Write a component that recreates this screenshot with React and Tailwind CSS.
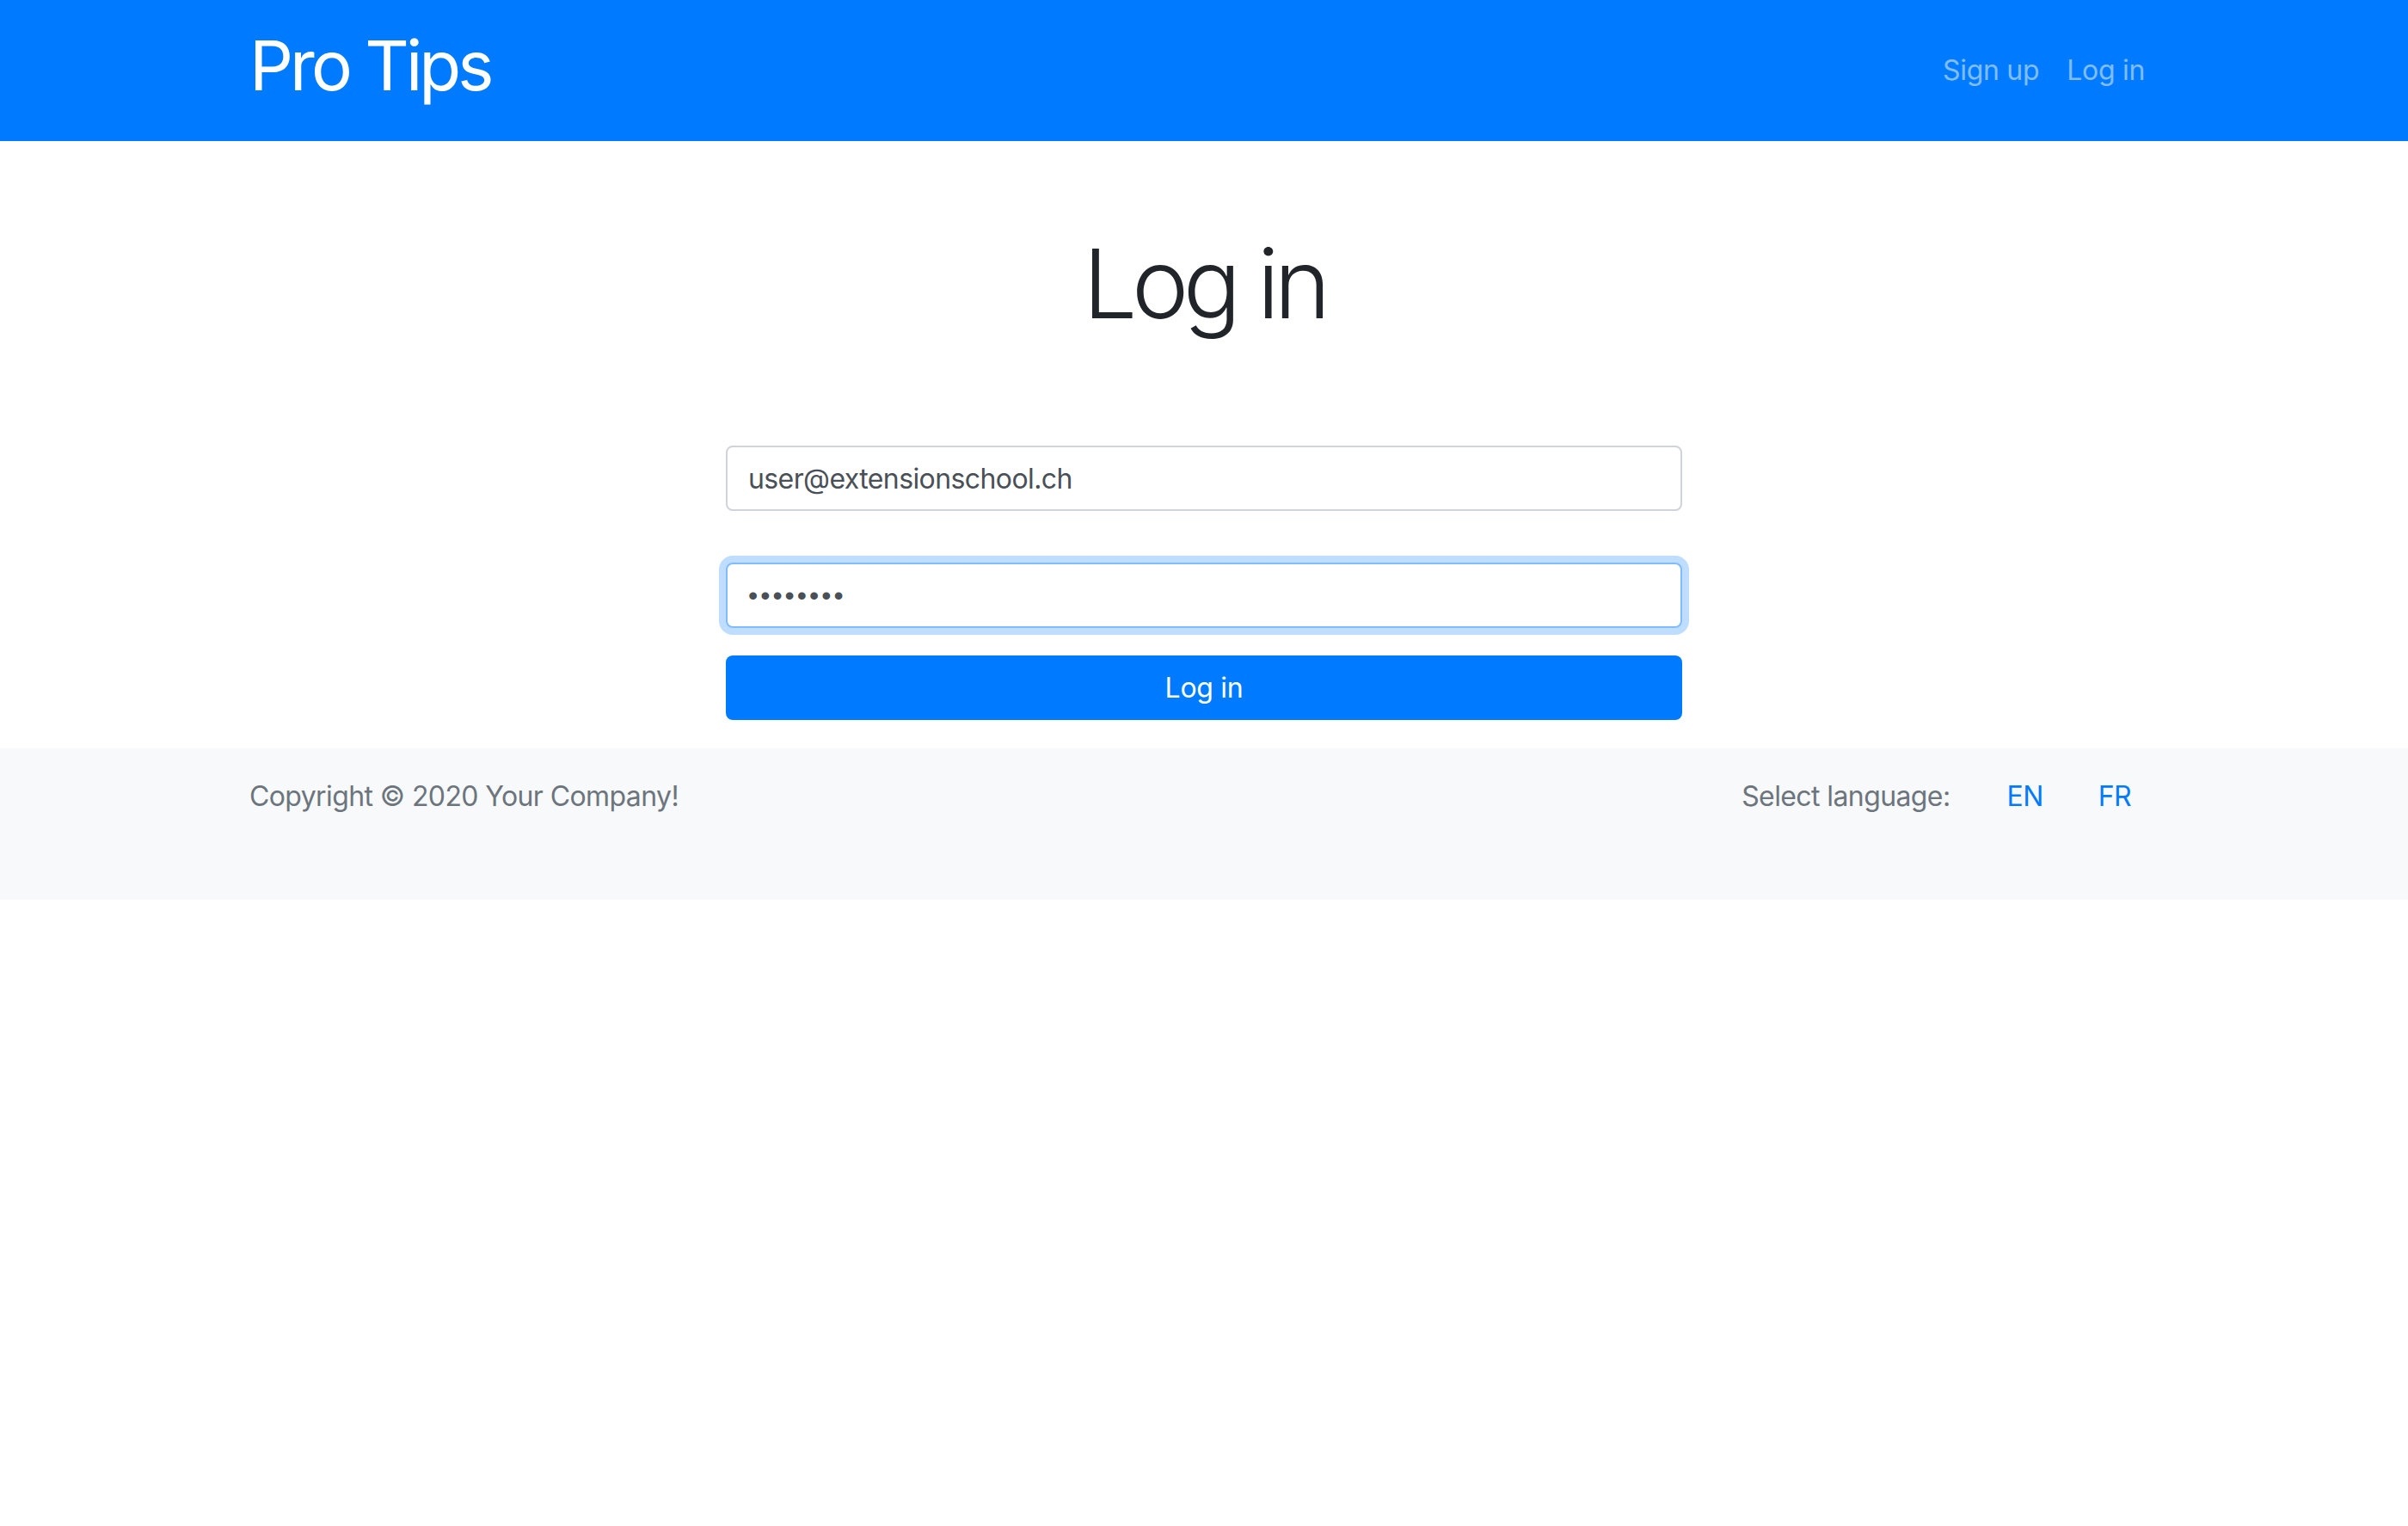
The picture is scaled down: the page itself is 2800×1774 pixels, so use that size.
export default function App() {
  return (
    <div className="min-h-screen bg-white text-[#212529]" style={{ fontFamily: 'Inter, "Noto Sans", sans-serif' }}>
      {/* Navbar */}
      <nav className="bg-[#007bff] h-[164px]">
        <div className="max-w-[2280px] mx-auto px-[30px] h-full flex items-center justify-between">
          <a href="#" className="text-white text-[80px] leading-[80px] font-normal mb-[12px] tracking-[-4px]">Pro Tips</a>
          <div className="flex items-center">
            <a href="#" className="px-[16px] text-[32px] leading-[48px] text-white/50 tracking-[-0.3px]">Sign up</a>
            <a href="#" className="px-[16px] text-[32px] leading-[48px] text-white/50 tracking-[-0.3px]">Log in</a>
          </div>
        </div>
      </nav>

      {/* Main */}
      <main className="max-w-[2280px] mx-auto px-[30px]">
        <h1 className="text-center text-[112px] leading-[134px] font-light mt-[98px] tracking-[-6.5px]">Log in</h1>

        <form className="w-[1112px] mx-auto mt-[122px] flex flex-col" onSubmit={e => e.preventDefault()}>
          <input
            type="email"
            defaultValue="user@extensionschool.ch"
            className="h-[76px] w-full border-2 border-[#ced4da] rounded-[8px] px-[24px] text-[32px] text-[#495057] bg-white outline-none tracking-[-0.6px]"
          />
          <input
            type="password"
            defaultValue="password"
            style={{ fontFamily: '"Liberation Sans", Arial, sans-serif' }}
            className="h-[76px] w-full mt-[60px] border-2 border-[#80bdff] rounded-[8px] px-[24px] text-[32px] text-[#495057] bg-white outline-none tracking-[3px] shadow-[0_0_0_8px_rgba(0,123,255,0.25)]"
          />
          <button
            type="submit"
            className="h-[75px] w-full mt-[32px] bg-[#007bff] rounded-[8px] text-white text-[32px] tracking-[-0.3px]"
          >
            Log in
          </button>
        </form>
      </main>

      {/* Footer */}
      <footer className="bg-[#f8f9fa] h-[176px] mt-[33px]">
        <div className="max-w-[2280px] mx-auto px-[30px] pt-[32px] flex items-center justify-between text-[32px] leading-[48px] tracking-[-0.6px]">
          <span className="text-[#6c757d]">Copyright © 2020 Your Company!</span>
          <div className="flex items-center">
            <span className="text-[#6c757d] mr-[34px]">Select language:</span>
            <a href="#" className="px-[32px] text-[#007bff]">EN</a>
            <a href="#" className="px-[32px] text-[#007bff]">FR</a>
          </div>
        </div>
      </footer>
    </div>
  )
}
